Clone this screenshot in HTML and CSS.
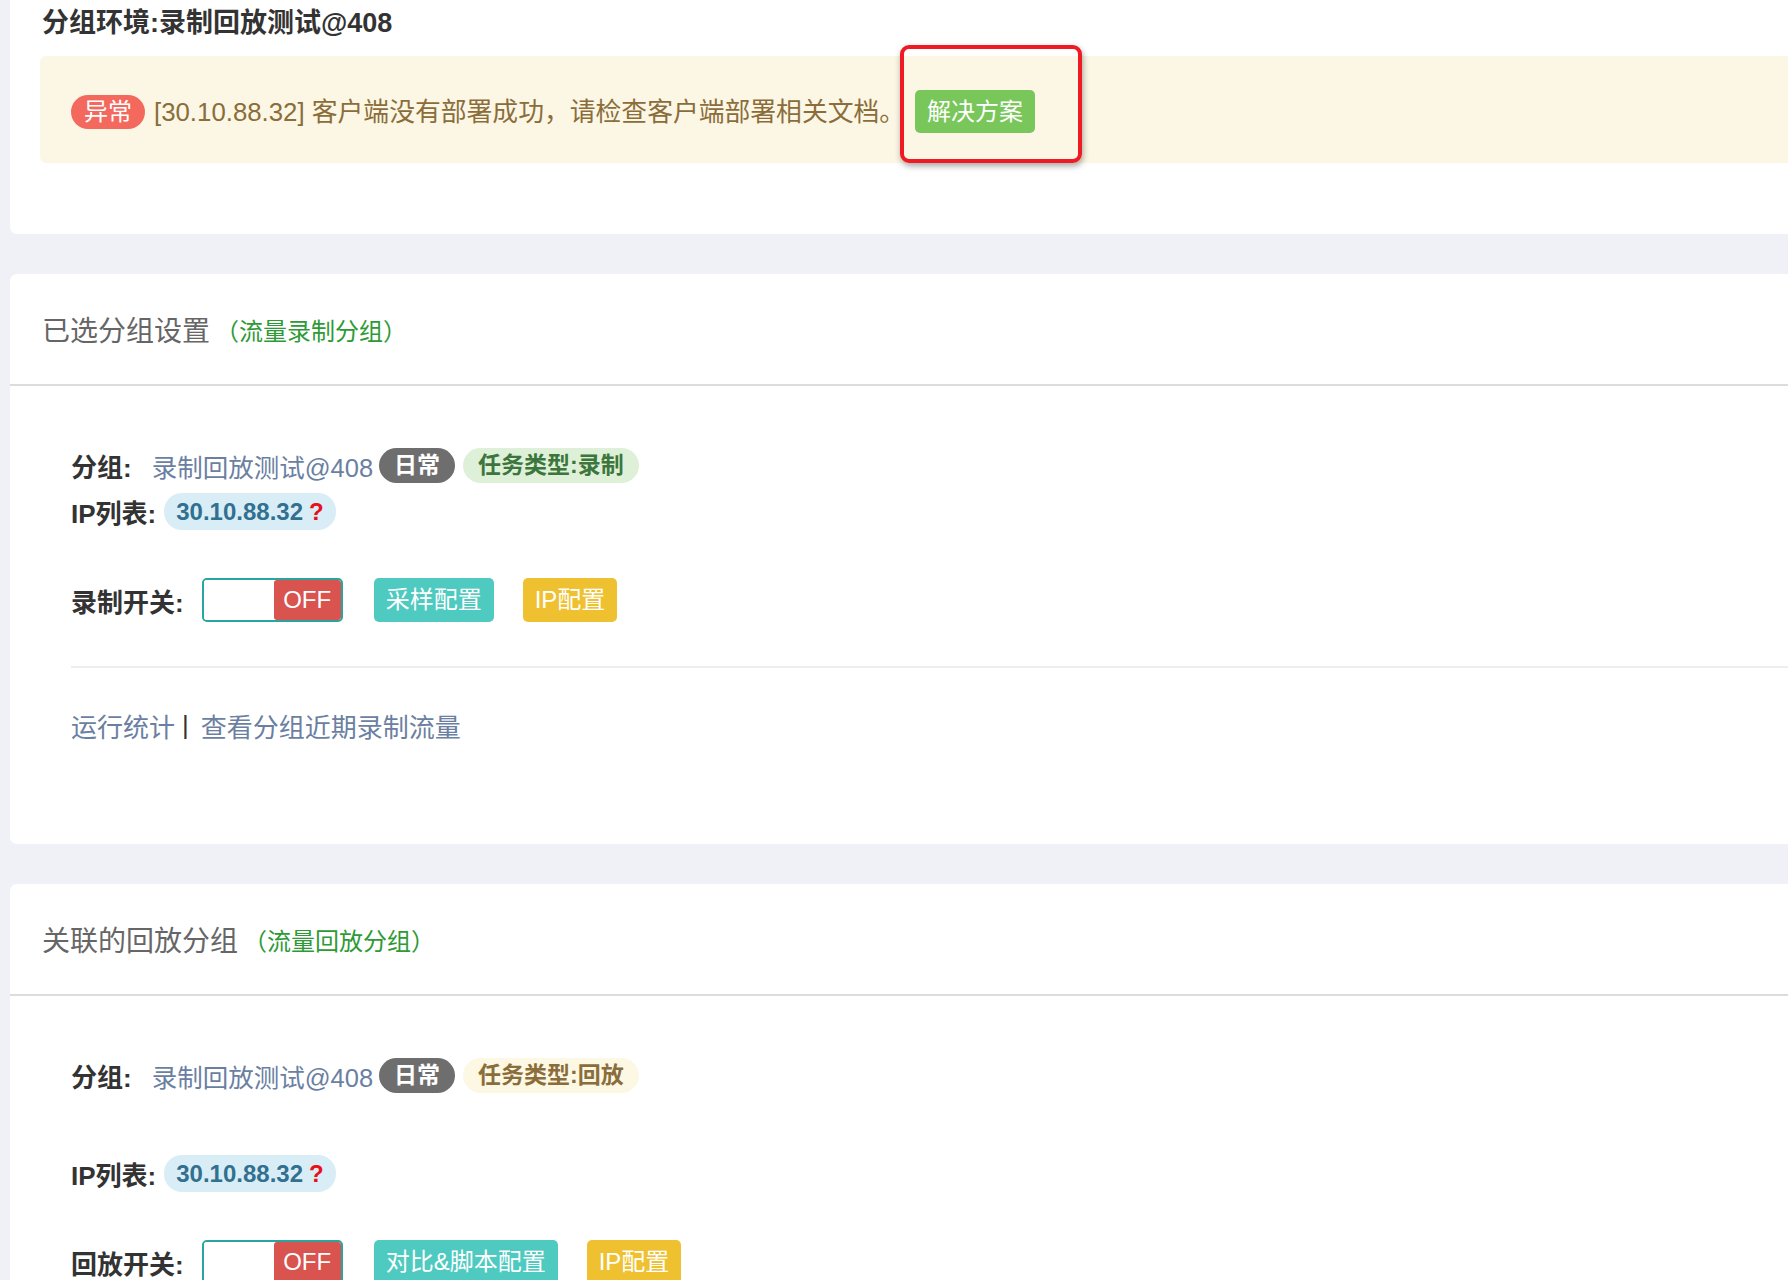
FILE: index.html
```html
<!DOCTYPE html>
<html lang="zh-CN">
<head>
<meta charset="utf-8">
<title>分组环境</title>
<link rel="stylesheet" href="styles.css">
</head>
<body>
<div class="page">
  <section class="card card-env">
    <h2 class="env-title">分组环境:录制回放测试@408</h2>
    <div class="alert">
      <span class="badge-danger">异常</span>
      <span class="alert-text">[30.10.88.32] 客户端没有部署成功，请检查客户端部署相关文档。</span>
      <span class="solution-wrap">
        <a class="btn btn-green">解决方案</a>
        <span class="highlight-box"></span>
      </span>
    </div>
  </section>

  <section class="card">
    <div class="card-head">
      <span class="head-title">已选分组设置</span>
      <span class="head-sub">（流量录制分组）</span>
    </div>
    <div class="card-body">
      <div class="row">
        <span class="label">分组:</span>
        <a class="group-link">录制回放测试@408</a>
        <span class="pill pill-dark">日常</span>
        <span class="pill pill-success">任务类型:录制</span>
      </div>
      <div class="row">
        <span class="label">IP列表:</span>
        <span class="pill pill-info">30.10.88.32<span class="q">?</span></span>
      </div>
      <div class="row row-switch">
        <span class="label">录制开关:</span>
        <span class="toggle"><span class="toggle-on"></span><span class="toggle-off">OFF</span></span>
        <a class="btn btn-teal">采样配置</a>
        <a class="btn btn-yellow">IP配置</a>
      </div>
      <hr class="sep">
      <div class="row links">
        <a>运行统计</a><span class="bar">|</span><a>查看分组近期录制流量</a>
      </div>
    </div>
  </section>

  <section class="card">
    <div class="card-head">
      <span class="head-title">关联的回放分组</span>
      <span class="head-sub">（流量回放分组）</span>
    </div>
    <div class="card-body">
      <div class="row">
        <span class="label">分组:</span>
        <a class="group-link">录制回放测试@408</a>
        <span class="pill pill-dark">日常</span>
        <span class="pill pill-warning">任务类型:回放</span>
      </div>
      <div class="row row-spaced">
        <span class="label">IP列表:</span>
        <span class="pill pill-info">30.10.88.32<span class="q">?</span></span>
      </div>
      <div class="row row-switch">
        <span class="label">回放开关:</span>
        <span class="toggle"><span class="toggle-on"></span><span class="toggle-off">OFF</span></span>
        <a class="btn btn-teal">对比&amp;脚本配置</a>
        <a class="btn btn-yellow">IP配置</a>
      </div>
    </div>
  </section>
</div>
</body>
</html>
```

FILE: styles.css
```css
html, body {
  margin: 0;
  padding: 0;
}

body {
  background: #f0f1f6;
  font-family: "Liberation Sans", "Noto Sans CJK SC", sans-serif;
  color: #333;
}

.page {
  padding-left: 10px;
  height: 1280px;
  overflow: hidden;
}

.card {
  background: #fff;
  border-radius: 7px;
  margin-right: -14px;
}

.card + .card {
  margin-top: 40px;
}

/* ---------- environment card ---------- */
.card-env {
  border-radius: 0 0 0 7px;
  padding: 0 0 71px 30px;
}

.env-title {
  margin: 0;
  padding-left: 2px;
  font-size: 27px;
  font-weight: bold;
  line-height: 46px;
  color: #333;
}

.alert {
  margin-top: 10px;
  height: 107px;
  box-sizing: border-box;
  background: #fcf7e4;
  border-radius: 6px 0 0 6px;
  display: flex;
  align-items: center;
  padding: 4px 0 0 31px;
}

.badge-danger {
  width: 74px;
  height: 34px;
  border-radius: 17px;
  background: #f4695d;
  color: #fff;
  font-size: 24px;
  line-height: 34px;
  text-align: center;
  margin-right: 9px;
}

.alert-text {
  color: #8a6d3b;
  font-size: 25.8px;
  line-height: 34px;
}

.solution-wrap {
  position: relative;
  display: flex;
  margin-left: 10px;
}

.highlight-box {
  position: absolute;
  left: -15px;
  top: -45px;
  width: 182px;
  height: 118px;
  box-sizing: border-box;
  border: 4px solid #ee1b24;
  border-radius: 9px;
  box-shadow: 1px 3px 6px rgba(0, 0, 0, 0.35);
  pointer-events: none;
}

/* ---------- buttons ---------- */
.btn {
  display: inline-block;
  height: 44px;
  line-height: 44px;
  padding: 0 12px;
  border-radius: 5px;
  color: #fff;
  font-size: 24px;
  white-space: nowrap;
}

.btn-green {
  background: #79c65b;
  height: 43px;
  line-height: 43px;
}

.btn-teal {
  background: #4ecac0;
  margin-left: 31px;
}

.btn-yellow {
  background: #efc130;
  margin-left: 29px;
}

/* ---------- group cards ---------- */
.card-head {
  height: 110px;
  border-bottom: 2px solid #dcdcdc;
  display: flex;
  align-items: center;
  padding-left: 32px;
}

.head-title {
  font-size: 28px;
  color: #666;
}

.head-sub {
  font-size: 24px;
  color: #2e9a35;
  margin-left: 5px;
}

.card-body {
  padding: 59px 0 99px 61px;
}

.row {
  display: flex;
  align-items: center;
  height: 40px;
  white-space: nowrap;
}

.row + .row {
  margin-top: 6px;
}

.row.row-spaced {
  margin-top: 58px;
}

.row.row-switch {
  height: 44px;
  margin-top: 47px;
}

.label {
  font-size: 26px;
  font-weight: bold;
  color: #333;
}

.group-link {
  color: #6b7fa2;
  font-size: 25.5px;
  margin-left: 20px;
}

.pill {
  height: 35px;
  line-height: 35px;
  border-radius: 18px;
  padding: 0 15px;
  font-size: 23px;
  font-weight: bold;
}

.pill-dark {
  background: #6e6e6e;
  color: #fff;
  margin-left: 6px;
}

.pill-success {
  background: #dff0d8;
  color: #3c763d;
  margin-left: 8px;
}

.pill-warning {
  background: #fcf8e3;
  color: #8a6d3b;
  margin-left: 8px;
}

.pill-info {
  background: #d9edf7;
  color: #31708f;
  font-size: 24px;
  height: 37px;
  line-height: 37px;
  padding: 0 12px 0 12px;
  margin-left: 8px;
}

.q {
  color: #e8101a;
  margin-left: 6px;
}

.toggle {
  margin-left: 18px;
  width: 141px;
  height: 44px;
  box-sizing: border-box;
  border: 2px solid #27a59e;
  border-radius: 5px;
  display: flex;
  overflow: hidden;
}

.toggle-on {
  width: 70px;
  background: #fff;
  border-radius: 0 3px 3px 0;
}

.toggle-off {
  flex: 1;
  background: #d9534f;
  color: #fff;
  font-size: 24px;
  line-height: 40px;
  text-align: center;
  border-radius: 3px 0 0 3px;
}

.sep {
  margin: 44px 0 0;
  height: 0;
  border: 0;
  border-top: 2px solid #eeeeee;
}

.row.links {
  margin-top: 37px;
}

.links a {
  color: #6b7fa2;
  font-size: 26px;
}

.links .bar {
  color: #333;
  font-size: 26px;
  margin: 0 12px 0 7px;
}
```
